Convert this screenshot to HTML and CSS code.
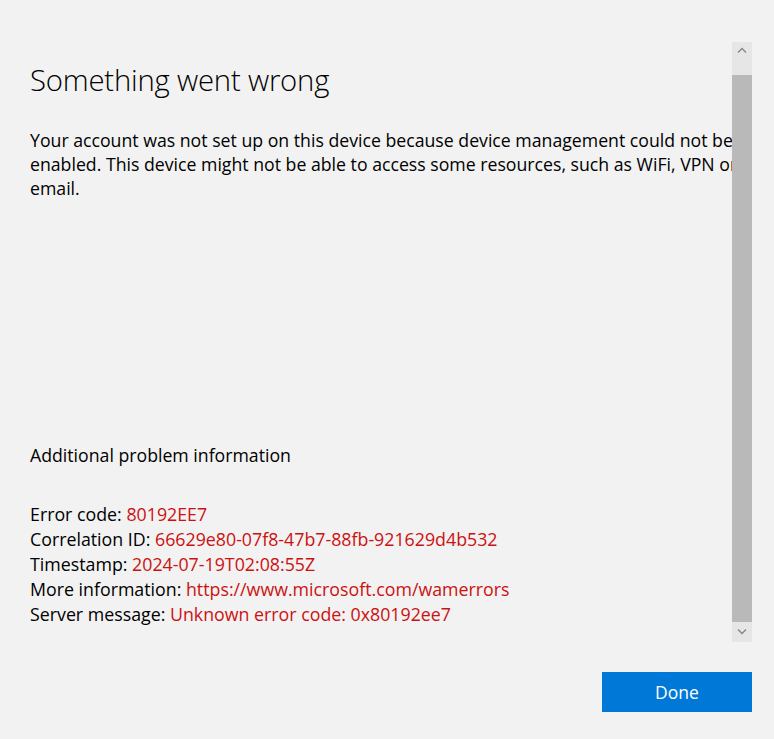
FILE: index.html
```html
<!DOCTYPE html>
<html lang="en">
<head>
    <meta charset="UTF-8">
    <meta name="viewport" content="width=device-width, initial-scale=1.0">
    <title>Something went wrong</title>
    <link rel="stylesheet" href="styles.css">
</head>
<body>
    <div class="dialog">
        <div class="scroll-area">
            <div class="viewport">
                <div class="content">
                    <h1 class="title">Something went wrong</h1>
                    <p class="message">Your account was not set up on this device because device management could not be enabled. This device might not be able to access some resources, such as WiFi, VPN or email.</p>

                    <h2 class="section-title">Additional problem information</h2>
                    <ul class="details">
                        <li>Error code: <span class="value">80192EE7</span></li>
                        <li>Correlation ID: <span class="value">66629e80-07f8-47b7-88fb-921629d4b532</span></li>
                        <li>Timestamp: <span class="value">2024-07-19T02:08:55Z</span></li>
                        <li>More information: <span class="value">https://www.microsoft.com/wamerrors</span></li>
                        <li>Server message: <span class="value">Unknown error code: 0x80192ee7</span></li>
                    </ul>
                </div>
            </div>
            <div class="scrollbar">
                <div class="arrow arrow-up">
                    <svg width="10" height="6" viewBox="0 0 10 6"><path d="M1 5.5 L5 1.5 L9 5.5" fill="none" stroke="#858585" stroke-width="1.3"/></svg>
                </div>
                <div class="thumb"></div>
                <div class="arrow arrow-down">
                    <svg width="10" height="6" viewBox="0 0 10 6"><path d="M1 0.5 L5 4.5 L9 0.5" fill="none" stroke="#858585" stroke-width="1.3"/></svg>
                </div>
            </div>
        </div>
        <div class="footer">
            <button class="btn done-btn">Done</button>
        </div>
    </div>
</body>
</html>
```

FILE: styles.css
```css
body {
    margin: 0;
    background-color: #f2f2f2;
    font-family: 'Open Sans', 'Noto Sans', sans-serif;
    color: #000;
}

.dialog {
    width: 774px;
    height: 739px;
    padding: 42px 22px 0 30px;
    box-sizing: border-box;
}

.scroll-area {
    display: flex;
    height: 600px;
}

.viewport {
    width: 702px;
    overflow: hidden;
}

.content {
    width: 730px;
}

.title {
    font-size: 29.3px;
    font-weight: 300;
    line-height: 36px;
    margin: 20px 0 0 0;
    letter-spacing: -0.2px;
}

.message {
    font-size: 17.7px;
    line-height: 24px;
    margin: 30px 0 0 0;
}

.section-title {
    font-size: 17.7px;
    font-weight: 400;
    line-height: 24px;
    margin: 243px 0 0 0;
}

.details {
    list-style: none;
    padding: 0;
    margin: 35px 0 0 0;
    font-size: 17.8px;
    line-height: 25px;
}

.value {
    color: #cc1111;
}

.scrollbar {
    width: 20px;
    display: flex;
    flex-direction: column;
    background-color: #e6e6e6;
}

.arrow {
    display: flex;
    justify-content: center;
    align-items: center;
    height: 20px;
}

.arrow-up {
    height: 33px;
    align-items: flex-start;
    padding-top: 5px;
    box-sizing: border-box;
}

.thumb {
    flex: 1;
    background-color: #b9b9b9;
}

.footer {
    display: flex;
    justify-content: flex-end;
    margin-top: 30px;
}

.btn {
    width: 150px;
    height: 40px;
    border: none;
    font-family: inherit;
    font-size: 17.5px;
    cursor: pointer;
}

.done-btn {
    background-color: #0078d7;
    color: #fff;
}
```
